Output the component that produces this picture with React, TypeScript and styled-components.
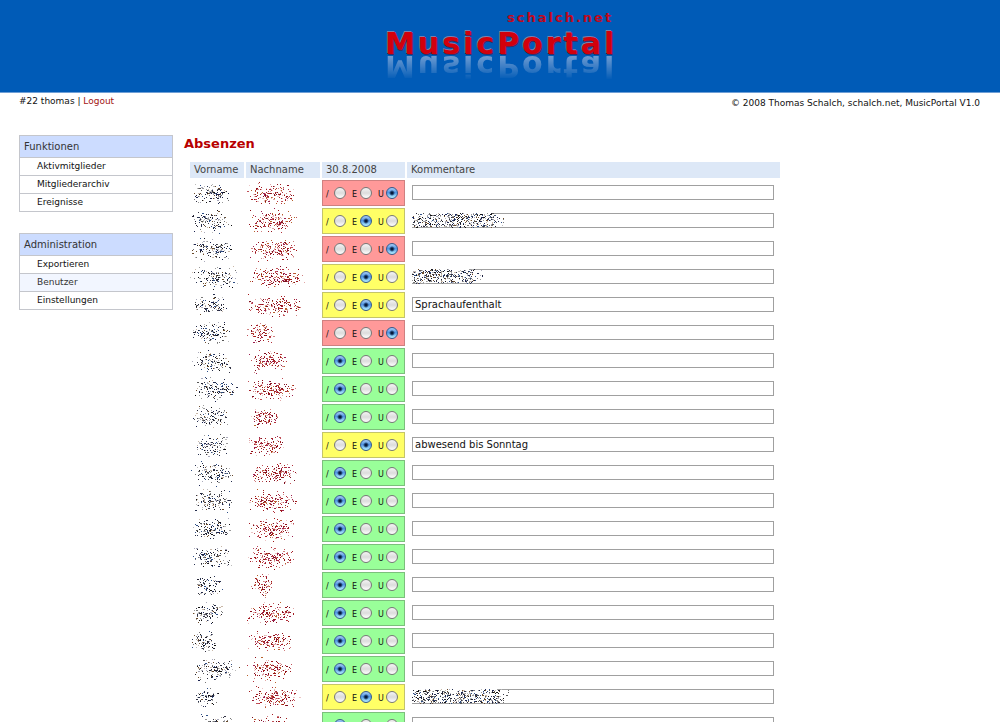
import React from 'react';
import styled, { createGlobalStyle, css } from 'styled-components';

const GlobalStyle = createGlobalStyle`
  *, *::before, *::after { box-sizing: border-box; }
  body {
    margin: 0;
    background: #fff;
    color: #111;
    font-family: Verdana, "DejaVu Sans", sans-serif;
    font-size: 10px;
    line-height: 14px;
  }
`;

const Page = styled.div`
  height: 100vh;
  overflow: hidden;
`;

const Banner = styled.header`
  display: flex;
  justify-content: center;
  height: 93px;
  background: #005bb7;
  border-bottom: 1px solid #6f9fd6;
`;

const StatusBar = styled.div`
  display: flex;
  justify-content: space-between;
  padding: 0 20px 0 19px;
  font-size: 9px;
  line-height: 16px;
`;

const Copyright = styled.span`
  padding-top: 2px;
`;

const LogoutLink = styled.a`
  color: #a31515;
  text-decoration: none;
`;

const Columns = styled.div`
  display: flex;
  align-items: flex-start;
  gap: 11px;
  padding: 24px 20px 0 19px;
`;

const Sidebar = styled.nav`
  flex: none;
  display: flex;
  flex-direction: column;
  gap: 21px;
  width: 154px;
`;

const MenuBox = styled.section`
  border: 1px solid #c4c6cc;
`;

const MenuTitle = styled.h2`
  margin: 0;
  padding: 0 4px;
  background: #ccdcff;
  color: #333;
  font-size: 10px;
  font-weight: normal;
  line-height: 21px;
`;

const MenuList = styled.ul`
  margin: 0;
  padding: 0;
  list-style: none;
`;

const MenuItem = styled.li<{ $active?: boolean }>`
  border-top: 1px solid #c4c6cc;
  background: ${p => (p.$active ? '#f2f6ff' : '#fff')};
`;

const MenuLink = styled.a<{ $active?: boolean }>`
  display: block;
  padding-left: 17px;
  color: ${p => (p.$active ? '#333' : '#111')};
  font-size: 9px;
  line-height: 17px;
  text-decoration: none;
`;

const Content = styled.main`
  flex: 1;
  min-width: 0;
`;

const Title = styled.h1`
  margin: 0;
  color: #b80000;
  font-size: 13px;
  font-weight: bold;
  line-height: 18px;
  padding-bottom: 7px;
`;

const Table = styled.table`
  table-layout: fixed;
  width: 100%;
  max-width: 594px;
  margin-left: 4px;
  border-spacing: 2px;
  border-collapse: separate;
`;

const Col = styled.col<{ $width?: number }>`
  ${p => p.$width && css`width: ${p.$width}px;`}
`;

const HeadCell = styled.th`
  height: 16px;
  padding: 0 4px;
  background: #dde8f7;
  color: #444;
  font-weight: normal;
  line-height: 16px;
  text-align: left;
`;

const Cell = styled.td`
  height: 26px;
  padding: 0;
  line-height: 0;
`;

type Status = '/' | 'E' | 'U';

const statusColors: Record<Status, [string, string]> = {
  '/': ['#99ff99', '#7cbf7c'],
  E: ['#ffff66', '#c4c46a'],
  U: ['#ff9999', '#cf8080'],
};

const StatusCell = styled(Cell)<{ $status: Status }>`
  padding-left: 3px;
  background: ${p => statusColors[p.$status][0]};
  border: 1px solid ${p => statusColors[p.$status][1]};
`;

const Options = styled.div`
  display: flex;
  gap: 6px;
`;

const Option = styled.label`
  display: flex;
  align-items: center;
  height: 24px;
  color: #111;
  font-size: 8px;
  line-height: 12px;
`;

const OptionText = styled.span`
  width: 8px;
  padding-top: 3px;
`;

const Radio = styled.input.attrs({ type: 'radio' })`
  appearance: none;
  width: 12px;
  height: 12px;
  margin: 0;
  border: 1px solid #777;
  border-radius: 50%;
  background: linear-gradient(#f4f4f4, #dcdcdc 50%, #fff);

  &:checked {
    border-color: #35598c;
    background:
      radial-gradient(circle at 50% 50%, #051a3c 0 1px, transparent 3px),
      linear-gradient(#a9cdf4, #4f95e4 45%, #b4f0ff);
  }
`;

const CommentCell = styled(Cell)`
  position: relative;
  padding: 0 6px 1px 5px;
`;

const CommentInput = styled.input.attrs({ type: 'text' })`
  display: block;
  width: 100%;
  height: 15px;
  padding: 0 2px;
  border: 1px solid #a0a0a0;
  border-radius: 0;
  background: #fff;
  color: #111;
  font: 10px/13px Verdana, "DejaVu Sans", sans-serif;
`;

const NameSpeckle = styled.svg`
  display: block;
  overflow: visible;
`;

const CommentSpeckle = styled.svg`
  position: absolute;
  left: 5px;
  top: 5px;
  pointer-events: none;
`;

const INK = ['#111', '#223', '#334', '#555', '#1b2350', '#26304f', '#777', '#999', '#aab', '#bbb', '#c9b8a8', '#6a4a2a', '#2e4f86'];
const RED = ['#8f0f1a', '#a51c24', '#b3303a', '#7a1020', '#c05058', '#d08080', '#9c2050', '#e0a8a8', '#ecc4c4', '#b8602a', '#a01818'];

function makeRandom(seed: number) {
  let s = (seed * 7919 + 12345) % 2147483647;
  return () => {
    s = (s * 48271) % 2147483647;
    return s / 2147483647;
  };
}

/* Scattered pixels; `spread` makes them denser around the middle line. */
function dots(seed: number, x: number, w: number, h: number, count: number, colors: string[], spread: boolean) {
  const rnd = makeRandom(seed);
  rnd();
  rnd();
  return Array.from({ length: count }, (_, i) => {
    const px = spread ? x + (rnd() * 0.65 + rnd() * 0.35) * w : x + rnd() * w;
    const py = spread ? h / 2 + (rnd() + rnd() + rnd() - 1.5) * h * 0.45 : rnd() * (h - 1);
    const color = colors[Math.floor(rnd() * colors.length)];
    return (
      <rect key={i} x={Math.round(px)} y={Math.round(py)} width={rnd() > 0.88 ? 2 : 1} height={1} fill={color} />
    );
  });
}

function HiddenName({ seed, x, w, red }: { seed: number; x: number; w: number; red?: boolean }) {
  return (
    <NameSpeckle width="50" height="20" role="img" aria-label={red ? 'Nachname' : 'Vorname'}>
      {dots(seed, x, w, 20, Math.round(w * (red ? 3.4 : 3)), red ? RED : INK, true)}
    </NameSpeckle>
  );
}

function HiddenComment({ seed, w }: { seed: number; w: number }) {
  return (
    <CommentSpeckle width={w} height="16" aria-hidden="true">
      <rect width={w - 12} height="14" fill="#fff" />
      {dots(seed, 0, w - 10, 15, w * 5, INK, false)}
      {dots(seed + 9, w - 16, 16, 15, 22, INK, false)}
    </CommentSpeckle>
  );
}

interface Entry {
  status: Status;
  first: [number, number];
  last: [number, number];
  comment?: string;
  hidden?: number;
}

const entries: Entry[] = [
  { status: 'U', first: [190, 230], last: [247, 295] },
  { status: 'E', first: [190, 232], last: [247, 297], hidden: 92 },
  { status: 'U', first: [190, 233], last: [248, 299] },
  { status: 'E', first: [190, 238], last: [249, 304], hidden: 71 },
  { status: 'E', first: [193, 228], last: [247, 302], comment: 'Sprachaufenthalt' },
  { status: 'U', first: [190, 232], last: [246, 276] },
  { status: '/', first: [192, 231], last: [247, 287] },
  { status: '/', first: [192, 236], last: [247, 296] },
  { status: '/', first: [191, 229], last: [247, 279] },
  { status: 'E', first: [192, 229], last: [247, 285], comment: 'abwesend bis Sonntag' },
  { status: '/', first: [191, 236], last: [247, 298] },
  { status: '/', first: [191, 233], last: [247, 297] },
  { status: '/', first: [190, 233], last: [247, 296] },
  { status: '/', first: [190, 233], last: [247, 295] },
  { status: '/', first: [194, 222], last: [249, 273] },
  { status: '/', first: [190, 224], last: [247, 296] },
  { status: '/', first: [190, 218], last: [248, 292] },
  { status: '/', first: [192, 240], last: [246, 293] },
  { status: 'E', first: [194, 218], last: [248, 300], hidden: 97 },
  { status: '/', first: [194, 234], last: [248, 290] },
];

const choices: { value: Status; label: string }[] = [
  { value: '/', label: '/' },
  { value: 'E', label: 'E' },
  { value: 'U', label: 'U' },
];

const menus = [
  { title: 'Funktionen', items: ['Aktivmitglieder', 'Mitgliederarchiv', 'Ereignisse'] },
  { title: 'Administration', items: ['Exportieren', 'Benutzer', 'Einstellungen'] },
];

const LogoText = styled.text`
  font-family: Verdana, "DejaVu Sans", sans-serif;
  font-weight: bold;
`;

function Logo() {
  return (
    <svg width="240" height="92" viewBox="0 0 240 92" role="img" aria-label="schalch.net MusicPortal">
      <defs>
        <LogoText id="wordmark" x="5" y="54" fontSize="30" letterSpacing="3">MusicPortal</LogoText>
        <linearGradient id="fade" x1="0" y1="56" x2="0" y2="80" gradientUnits="userSpaceOnUse">
          <stop offset="0" stopColor="#fff" stopOpacity="0.65" />
          <stop offset="1" stopColor="#fff" stopOpacity="0" />
        </linearGradient>
        <mask id="mirror" maskUnits="userSpaceOnUse" x="0" y="55" width="240" height="30">
          <rect x="0" y="55" width="240" height="30" fill="url(#fade)" />
        </mask>
      </defs>
      <LogoText x="127" y="22" fontSize="13" letterSpacing="2" fill="#c0081c">schalch.net</LogoText>
      <g mask="url(#mirror)">
        <use href="#wordmark" fill="#a9bfe0" transform="matrix(1 0 0 -1 0 110)" />
      </g>
      <use href="#wordmark" x="-1" y="-1" fill="#7d7fae" />
      <use href="#wordmark" x="1" y="1" fill="#3c2a62" />
      <use href="#wordmark" fill="#d2000c" />
    </svg>
  );
}

export default function App() {
  return (
    <Page>
      <GlobalStyle />
      <Banner>
        <Logo />
      </Banner>
      <StatusBar>
        <span>
          #22 thomas | <LogoutLink href="#logout">Logout</LogoutLink>
        </span>
        <Copyright>© 2008 Thomas Schalch, schalch.net, MusicPortal V1.0</Copyright>
      </StatusBar>
      <Columns>
        <Sidebar>
          {menus.map(menu => (
            <MenuBox key={menu.title}>
              <MenuTitle>{menu.title}</MenuTitle>
              <MenuList>
                {menu.items.map(item => (
                  <MenuItem key={item} $active={item === 'Benutzer'}>
                    <MenuLink href={`#${item.toLowerCase()}`} $active={item === 'Benutzer'}>
                      {item}
                    </MenuLink>
                  </MenuItem>
                ))}
              </MenuList>
            </MenuBox>
          ))}
        </Sidebar>
        <Content>
          <Title>Absenzen</Title>
          <Table>
            <colgroup>
              <Col $width={54} />
              <Col $width={74} />
              <Col $width={83} />
              <Col />
            </colgroup>
            <thead>
              <tr>
                <HeadCell scope="col">Vorname</HeadCell>
                <HeadCell scope="col">Nachname</HeadCell>
                <HeadCell scope="col">30.8.2008</HeadCell>
                <HeadCell scope="col">Kommentare</HeadCell>
              </tr>
            </thead>
            <tbody>
              {entries.map((entry, i) => (
                <tr key={i}>
                  <Cell>
                    <HiddenName seed={i * 3 + 1} x={entry.first[0] - 190} w={entry.first[1] - entry.first[0]} />
                  </Cell>
                  <Cell>
                    <HiddenName seed={i * 5 + 101} x={entry.last[0] - 246} w={entry.last[1] - entry.last[0]} red />
                  </Cell>
                  <StatusCell $status={entry.status}>
                    <Options>
                      {choices.map(choice => (
                        <Option key={choice.value}>
                          <OptionText>{choice.label}</OptionText>
                          <Radio
                            name={`status-${i}`}
                            value={choice.value}
                            defaultChecked={choice.value === entry.status}
                          />
                        </Option>
                      ))}
                    </Options>
                  </StatusCell>
                  <CommentCell>
                    <CommentInput aria-label="Kommentar" defaultValue={entry.comment} />
                    {entry.hidden && <HiddenComment seed={i + 40} w={entry.hidden} />}
                  </CommentCell>
                </tr>
              ))}
            </tbody>
          </Table>
        </Content>
      </Columns>
    </Page>
  );
}
